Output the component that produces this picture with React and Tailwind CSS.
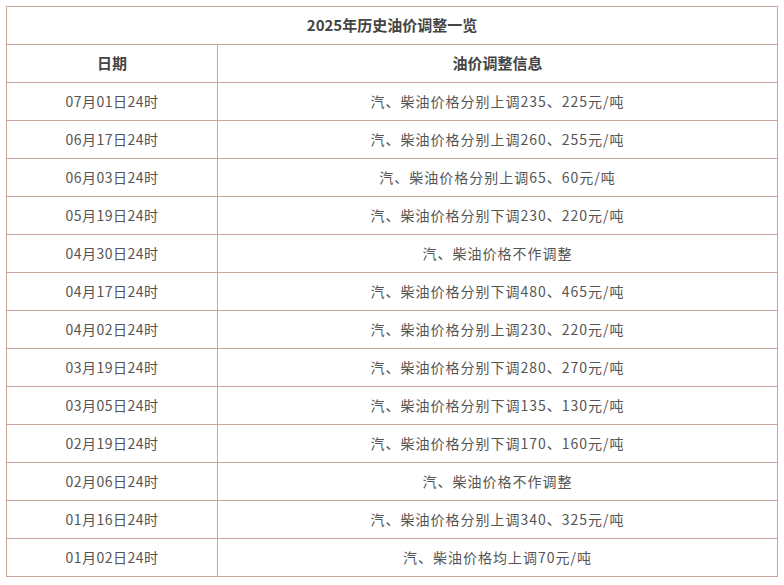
import React from 'react';

const rows = [
    ['07月01日24时', '汽、柴油价格分别上调235、225元/吨'],
    ['06月17日24时', '汽、柴油价格分别上调260、255元/吨'],
    ['06月03日24时', '汽、柴油价格分别上调65、60元/吨'],
    ['05月19日24时', '汽、柴油价格分别下调230、220元/吨'],
    ['04月30日24时', '汽、柴油价格不作调整'],
    ['04月17日24时', '汽、柴油价格分别下调480、465元/吨'],
    ['04月02日24时', '汽、柴油价格分别上调230、220元/吨'],
    ['03月19日24时', '汽、柴油价格分别下调280、270元/吨'],
    ['03月05日24时', '汽、柴油价格分别下调135、130元/吨'],
    ['02月19日24时', '汽、柴油价格分别下调170、160元/吨'],
    ['02月06日24时', '汽、柴油价格不作调整'],
    ['01月16日24时', '汽、柴油价格分别上调340、325元/吨'],
    ['01月02日24时', '汽、柴油价格均上调70元/吨'],
];

const cell = 'border border-[#c9a59e] h-[38px] p-0 text-center align-middle';

export default function App() {
    return (
        <div className="min-h-[585px] w-[784px] bg-white pl-[6px] pt-[6px] font-['Noto_Sans_CJK_SC','Noto_Sans',sans-serif] text-[14px] text-[#555]">
            <table className="w-[772px] border-collapse table-fixed">
                <colgroup>
                    <col className="w-[211px]" />
                    <col />
                </colgroup>
                <tbody>
                    <tr>
                        <td colSpan={2} className={cell + ' font-bold text-[15px] text-[#444]'}>
                            2025年历史油价调整一览
                        </td>
                    </tr>
                    <tr>
                        <td className={cell + ' font-bold text-[15px] text-[#444]'}>日期</td>
                        <td className={cell + ' font-bold text-[15px] text-[#444]'}>油价调整信息</td>
                    </tr>
                    {rows.map(([date, info]) => (
                        <tr key={date}>
                            <td className={cell + ' tracking-[0.5px]'}>{date}</td>
                            <td className={cell + ' tracking-[1px]'}>{info}</td>
                        </tr>
                    ))}
                </tbody>
            </table>
        </div>
    );
}
